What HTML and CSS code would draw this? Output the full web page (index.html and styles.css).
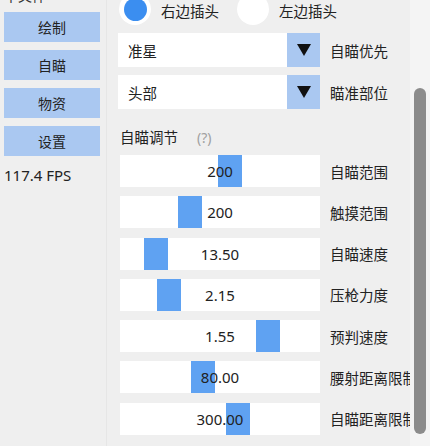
FILE: index.html
```html
<!DOCTYPE html>
<html lang="zh">
<head>
<meta charset="utf-8">
<link rel="stylesheet" href="styles.css">
</head>
<body>
<div class="app">
  <aside class="sidebar">
    <div class="sidebar-title">中文件</div>
    <div class="nav-btn">绘制</div>
    <div class="nav-btn">自瞄</div>
    <div class="nav-btn">物资</div>
    <div class="nav-btn">设置</div>
    <div class="fps">117.4 FPS</div>
  </aside>
  <main class="main">
    <div class="radio-row">
      <span class="radio checked"><span class="dot"></span></span>
      <span class="radio-label">右边插头</span>
      <span class="radio"></span>
      <span class="radio-label">左边插头</span>
    </div>
    <div class="combo-row">
      <div class="combo-box">准星</div>
      <div class="combo-arrow"><svg width="14" height="12" viewBox="0 0 14 12"><path d="M0 0 H14 L7 12 Z" fill="#111"/></svg></div>
      <span class="row-label">自瞄优先</span>
    </div>
    <div class="combo-row">
      <div class="combo-box">头部</div>
      <div class="combo-arrow"><svg width="14" height="12" viewBox="0 0 14 12"><path d="M0 0 H14 L7 12 Z" fill="#111"/></svg></div>
      <span class="row-label">瞄准部位</span>
    </div>
    <div class="section-head">自瞄调节<span class="help">(?)</span></div>
    <div class="sliders">
      <div class="slider-row"><div class="slider"><span class="handle" style="left:98px"></span><span class="value">200</span></div><span class="row-label">自瞄范围</span></div>
      <div class="slider-row"><div class="slider"><span class="handle" style="left:58px"></span><span class="value">200</span></div><span class="row-label">触摸范围</span></div>
      <div class="slider-row"><div class="slider"><span class="handle" style="left:24px"></span><span class="value">13.50</span></div><span class="row-label">自瞄速度</span></div>
      <div class="slider-row"><div class="slider"><span class="handle" style="left:37px"></span><span class="value">2.15</span></div><span class="row-label">压枪力度</span></div>
      <div class="slider-row"><div class="slider"><span class="handle" style="left:136px"></span><span class="value">1.55</span></div><span class="row-label">预判速度</span></div>
      <div class="slider-row"><div class="slider"><span class="handle" style="left:71px"></span><span class="value">80.00</span></div><span class="row-label">腰射距离限制</span></div>
      <div class="slider-row"><div class="slider"><span class="handle" style="left:106px"></span><span class="value">300.00</span></div><span class="row-label">自瞄距离限制</span></div>
    </div>
  </main>
  <div class="scroll-track"><div class="scroll-thumb"></div></div>
</div>
</body>
</html>
```

FILE: styles.css
```css
html, body {
  margin: 0;
  padding: 0;
  background: #efefef;
  font-family: "Noto Sans", "Noto Sans CJK SC", sans-serif;
  color: #222;
  overflow: hidden;
}

.app {
  display: flex;
  width: 430px;
  height: 446px;
  overflow: hidden;
}

.sidebar {
  width: 107px;
  flex: none;
  box-sizing: border-box;
  padding-left: 4px;
  border-right: 1px solid #e6e6e6;
  display: flex;
  flex-direction: column;
}

.sidebar-title {
  font-size: 14px;
  line-height: 14px;
  height: 14px;
  margin-top: -11px;
  margin-bottom: 9px;
  color: #333;
}

.nav-btn {
  width: 96px;
  height: 30px;
  margin-bottom: 8px;
  background: #aac8f1;
  display: flex;
  align-items: center;
  justify-content: center;
  font-size: 14px;
  color: #222;
}

.fps {
  margin-top: 1px;
  font-size: 15px;
  line-height: 20px;
  color: #222;
}

.main {
  width: 303px;
  flex: none;
  box-sizing: border-box;
  padding-left: 11px;
  overflow: hidden;
  display: flex;
  flex-direction: column;
}

.radio-row {
  display: flex;
  align-items: center;
  height: 32px;
  margin-top: -7px;
  margin-left: 1px;
}

.radio {
  width: 32px;
  height: 32px;
  border-radius: 50%;
  background: #fff;
  flex: none;
  display: flex;
  align-items: center;
  justify-content: center;
}

.radio .dot {
  width: 23px;
  height: 23px;
  border-radius: 50%;
  background: #3b8ef0;
}

.radio-label {
  font-size: 14.5px;
  margin-left: 10px;
  margin-right: 18px;
  padding-top: 2px;
  white-space: nowrap;
}

.combo-row {
  display: flex;
  align-items: center;
  height: 34px;
  margin-top: 8px;
}

.combo-box {
  width: 169px;
  height: 34px;
  box-sizing: border-box;
  padding-left: 10px;
  background: #fff;
  display: flex;
  align-items: center;
  font-size: 14.5px;
}

.combo-arrow {
  width: 33px;
  height: 34px;
  background: #aac8f1;
  display: flex;
  align-items: center;
  justify-content: center;
}

.row-label {
  margin-left: 10px;
  font-size: 14.5px;
  white-space: nowrap;
}

.section-head {
  margin-top: 18px;
  margin-left: 2px;
  height: 20px;
  line-height: 20px;
  font-size: 14.5px;
}

.help {
  margin-left: 19px;
  color: #a0a0a0;
  font-size: 14px;
}

.sliders {
  margin-top: 8px;
  margin-left: 2px;
  display: flex;
  flex-direction: column;
  gap: 9.3px;
}

.slider-row {
  display: flex;
  align-items: center;
  height: 32px;
}

.slider {
  position: relative;
  width: 200px;
  height: 32px;
  flex: none;
  background: #fff;
  display: flex;
  align-items: center;
  justify-content: center;
}

.handle {
  position: absolute;
  top: 0;
  width: 24px;
  height: 32px;
  background: #5fa2f2;
}

.value {
  position: relative;
  font-size: 15px;
  color: #222;
}

.scroll-track {
  width: 20px;
  flex: none;
  background: #f4f4f4;
  position: relative;
}

.scroll-thumb {
  margin-top: 88px;
  margin-left: 4px;
  width: 12px;
  height: 346px;
  border-radius: 6px;
  background: #8c8c8c;
}
```
